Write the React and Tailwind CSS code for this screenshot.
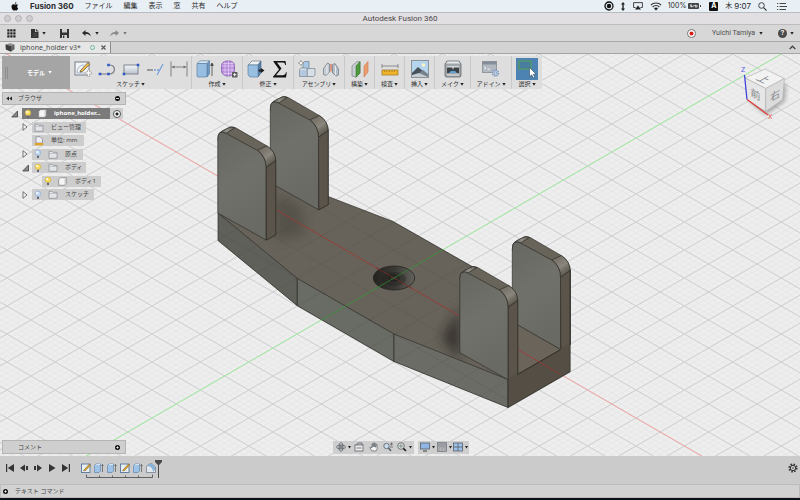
import React from "react";

const JP = "font-['Noto_Sans','Noto_Sans_CJK_JP',sans-serif]";
const UI = "font-['Inter','Noto_Sans_CJK_JP',sans-serif]";

function Svg({ w, h, box, className = "", children }) {
  return (
    <svg width={w} height={h} viewBox={box || `0 0 ${w} ${h}`} className={`block shrink-0 ${className}`} fill="none" aria-hidden="true">
      {children}
    </svg>
  );
}

function Caret({ color = "#222" }) {
  return (
    <Svg w={4} h={3}>
      <path d="M.3 0h3.400L2 2.800z" fill={color} />
    </Svg>
  );
}

/* ---------- menu bar ---------- */

function MenuBar() {
  const menus = ["ファイル", "編集", "表示", "窓", "共有", "ヘルプ"];
  return (
    <header className="flex h-[13px] shrink-0 items-center justify-between border-b border-[#b9bdc2] bg-[#e8eff5] pr-[13px] pl-[11px] text-[7px] leading-[12px] text-[#2b2b2d]">
      <nav className="flex items-center gap-[11px]">
        <button aria-label="Apple">
          <Svg w={8} h={9}>
            <path d="M5.3 0C5.4.9 4.700 1.800 3.900 1.900 3.800 1 4.500.2 5.300 0zM6.900 6.700C6.500 7.700 5.900 8.600 5.200 8.600 4.700 8.600 4.600 8.300 4 8.300S3.300 8.600 2.800 8.600C1.700 8.600.5 6.500.5 4.600.5 3 1.500 2.200 2.500 2.200 3.100 2.200 3.600 2.600 4 2.600S5 2.100 5.700 2.200C6.200 2.200 6.700 2.500 7 2.900 5.700 3.700 5.900 5.700 7.200 6.100z" fill="#111" />
          </Svg>
        </button>
        <button className="text-[8px] font-bold">Fusion 360</button>
        {menus.map((m) => (
          <button key={m}>{m}</button>
        ))}
      </nav>
      <div className="flex items-center">
        <Svg w={10} h={10} className="mr-[6px]">
          <circle cx="5" cy="5" r="4" stroke="#111" strokeWidth="1.300" />
          <circle cx="5" cy="5" r="2.200" fill="#111" />
        </Svg>
        <Svg w={6} h={9} className="mr-[7px]">
          <path d="M3 0l2 2.500H3.700v4H5L3 9 1 6.500h1.300v-4H1z" fill="#222" />
        </Svg>
        <Svg w={10} h={8} className="mr-[7px]">
          <path d="M2.500 5.500H.6V.6h8.800v4.900H7.500" stroke="#333" strokeWidth=".9" />
          <path d="M5 3.600l3 4H2z" fill="#222" />
        </Svg>
        <Svg w={12} h={9} className="mr-[6px]">
          <path d="M.8 3.200C3.600.2 8.400.2 11.200 3.200M2.600 5C4.500 3 7.500 3 9.400 5" stroke="#333" strokeWidth="1.100" />
          <path d="M4 6.400c1.200-1.100 2.800-1.100 4 0L6 8.500z" fill="#222" />
        </Svg>
        <span className="mr-[2px]">100%</span>
        <Svg w={13} h={6} className="mr-[8px]">
          <rect x="0" y="0" width="11" height="6" rx="1" fill="#444" />
          <rect x="12" y="2" width="1" height="2" fill="#444" />
          <path d="M3 1v3l5-2v3M2 3h2M7 3h3" stroke="#e8eff5" strokeWidth=".8" />
        </Svg>
        <span className="mr-[7px] flex h-[9px] w-[9px] items-center justify-center rounded-[1px] bg-[#111] font-bold text-white">A</span>
        <span className="mr-[2px]">木</span>
        <span className="mr-[7px] text-[8px]">9:07</span>
        <button aria-label="検索" className="mr-[10px]">
          <Svg w={9} h={9}>
            <circle cx="3.500" cy="3.500" r="2.800" stroke="#333" strokeWidth=".9" />
            <path d="M5.600 5.600l3 3" stroke="#333" strokeWidth="1.100" />
          </Svg>
        </button>
        <button aria-label="通知">
          <Svg w={10} h={7}>
            <path d="M0 .5h1.200M2.500 .5H9M0 3.500h1.200M2.500 3.500H10M0 6.500h1.200M2.500 6.500H9" stroke="#333" strokeWidth=".9" />
          </Svg>
        </button>
      </div>
    </header>
  );
}

function TitleBar() {
  return (
    <div className="grid h-3 shrink-0 grid-cols-[1fr_auto_1fr] items-center border-b border-[#bdbbbd] bg-[#e2dfe2]">
      <div className="flex gap-[4px] pl-[4px]">
        {["閉じる", "最小化", "拡大"].map((n) => (
          <button key={n} aria-label={n} className="h-[7px] w-[7px] rounded-full border border-[#b4b1b4] bg-[#d0cdd0]" />
        ))}
      </div>
      <h1 className="font-['Roboto',sans-serif] text-[8px] leading-[11px] text-[#4a484a]">Autodesk Fusion 360</h1>
      <span />
    </div>
  );
}

function QuickBar() {
  return (
    <div className="flex h-[17px] shrink-0 items-center justify-between border-b border-[#a9a9a9] bg-[#d7d7d7] pr-[6px] pl-[7px]">
      <div className="flex items-center">
        <button aria-label="データパネル" className="mr-[15px]">
          <Svg w={9} h={9}>
            {[0, 3, 6].flatMap((y) => [0, 3, 6].map((x) => <rect key={`${x}${y}`} x={x + 0.300} y={y + 0.300} width="2.200" height="2.200" fill="#1f1f1f" />))}
          </Svg>
        </button>
        <button aria-label="ファイル" className="mr-[14px] flex items-center gap-[3px]">
          <Svg w={8} h={9}>
            <path d="M0 0h4v3h3.500v6H0z" fill="#333" />
            <path d="M5 0l2.500 2.300H5zM2 5h4M2 7h4" fill="#333" stroke="#777" strokeWidth=".5" />
          </Svg>
          <Caret />
        </button>
        <button aria-label="保存" className="mr-[13px]">
          <Svg w={9} h={9}>
            <path d="M0 0h9v9H0z" fill="#333" />
            <path d="M2 0h5v3.500H2zM2 6h5v3H2z" fill="#d0d0d0" />
            <path d="M3 6.500h1.300V9H3z" fill="#333" />
          </Svg>
        </button>
        <button aria-label="元に戻す" className="mr-[11px] flex items-center gap-[4px]">
          <Svg w={9} h={7}>
            <path d="M0 3L3.500 0v2C7 2 8.500 3.700 8.700 6.500 7.500 4.500 6 4 3.500 4v2z" fill="#2b2b2b" />
          </Svg>
          <Caret />
        </button>
        <button aria-label="やり直し" className="flex items-center gap-[4px]">
          <Svg w={9} h={7}>
            <path d="M9 3L5.500 0v2C2 2 .5 3.700.3 6.500 1.500 4.500 3 4 5.500 4v2z" fill="#8a8a8a" />
          </Svg>
          <Caret color="#777" />
        </button>
      </div>
      <div className="flex items-center font-['Roboto',sans-serif] text-[7px] leading-[10px] text-[#4f4f4f]">
        <button aria-label="記録" className="mr-[16px]">
          <Svg w={9} h={9}>
            <circle cx="4.500" cy="4.500" r="4" fill="#fff" stroke="#555" strokeWidth=".8" />
            <circle cx="4.500" cy="4.500" r="2" fill="#d91e18" />
          </Svg>
        </button>
        <button className="mr-[15px] flex items-center gap-[4px]">
          Yuichi Tamiya
          <Caret />
        </button>
        <button aria-label="ヘルプ" className="flex items-center gap-[3px]">
          <span className="flex h-[9px] w-[9px] items-center justify-center rounded-full bg-[#4a4a4a] text-[7px] font-bold text-white">?</span>
          <Caret />
        </button>
      </div>
    </div>
  );
}

function TabRow() {
  return (
    <div className="flex h-3 shrink-0 items-stretch justify-between border-b border-[#a5a5a5] bg-[#d3d3d3]">
      <div className={`flex items-center border-r border-[#8c8c8c] bg-[#e6e6e6] pr-[4px] pl-[5px] text-[7px] leading-[10px] text-[#4a4a4a] ${JP}`}>
        <Svg w={10} h={9} className="mr-[5px]">
          <path d="M.5 1.500L5 .3l4.500 1.200L6 3z" fill="#8a8a8a" />
          <path d="M.5 1.500L6 3v5.700L.8 6.500z" fill="#3d3d3d" />
          <path d="M6 3l3.500-1.500v4.800L6 8.700z" fill="#666" />
        </Svg>
        <span>iphone_holder v3*</span>
        <Svg w={5} h={5} className="mr-[6px] ml-[9px]">
          <circle cx="2.500" cy="2.500" r="2" stroke="#55b393" strokeWidth=".8" />
        </Svg>
        <button aria-label="タブを閉じる">
          <Svg w={5} h={5}>
            <path d="M.5.5l4 4M4.500.5l-4 4" stroke="#555" strokeWidth="1.100" />
          </Svg>
        </button>
      </div>
      <button aria-label="折りたたむ" className="mr-[4px]">
        <Svg w={7} h={5}>
          <path d="M.7 4L3.500 1.200 6.300 4" stroke="#444" strokeWidth="1.300" />
        </Svg>
      </button>
    </div>
  );
}

/* ---------- ribbon icons ---------- */

const I = {
  sketch: (
    <Svg w={18} h={18}>
      <rect x="1" y="2" width="14" height="13" fill="#f3f5f7" stroke="#767f88" />
      <path d="M3 13C3 8 6 5 10 5M3 13h8" stroke="#8ba0b5" strokeWidth=".8" />
      <path d="M6.500 10.500L14 2.500l1.800 1.800-7.300 7.200-2.500.6z" fill="#f0bd47" stroke="#50463a" strokeWidth=".7" />
      <path d="M11.500 12h2v-2h2v2h2v2h-2v2.500h-2V14h-2z" fill="#fff" stroke="#999" strokeWidth=".6" />
    </Svg>
  ),
  line: (
    <Svg w={18} h={18}>
      <path d="M2 14h9c7 0 7-9 1-9" stroke="#6f757c" strokeWidth="1.100" />
      <path d="M.7 12.700h2.600v2.600H.7zM9.200 12.700h2.600v2.600H9.200zM9.200 3.700h2.600v2.600H9.200z" fill="#2c57c4" />
    </Svg>
  ),
  rect: (
    <Svg w={18} h={18}>
      <defs>
        <linearGradient id="rg" x2="0" y2="1"><stop stopColor="#f5f7fa" /><stop offset="1" stopColor="#b9c1cc" /></linearGradient>
      </defs>
      <rect x="2" y="5" width="14" height="9" fill="url(#rg)" stroke="#767d86" strokeWidth=".9" />
      <path d="M14.700 3.700h2.600v2.600h-2.600zM.7 12.700h2.600v2.600H.7z" fill="#2c57c4" />
    </Svg>
  ),
  trim: (
    <Svg w={18} h={18}>
      <path d="M1 10h6" stroke="#555" strokeWidth="1" />
      <path d="M8 10h6" stroke="#4a82d4" strokeWidth="1.100" strokeDasharray="2 1" />
      <path d="M17 4l-6 11" stroke="#6d9adb" strokeWidth="1.100" />
    </Svg>
  ),
  dim: (
    <Svg w={18} h={18}>
      <path d="M1 1.500v15M17 1.500v15M2 7h14" stroke="#777" strokeWidth=".9" />
      <path d="M1.500 7l3-1.500v3zM16.500 7l-3-1.500v3z" fill="#777" />
    </Svg>
  ),
  extrude: (
    <Svg w={18} h={18}>
      <path d="M1 3.500L4 .8h9.500L11 3.500z" fill="#d5e6f6" stroke="#55748f" strokeWidth=".6" />
      <path d="M11 3.500L13.500.8v13L11 17z" fill="#6a97c2" stroke="#557a9e" strokeWidth=".6" />
      <rect x="1" y="3.500" width="10" height="13.500" rx="1" fill="#98bfe2" stroke="#5c83a8" strokeWidth=".7" />
      <path d="M16 16V4M14.700 5.500L16 3l1.300 2.500z" fill="#333" stroke="#444" strokeWidth=".8" />
    </Svg>
  ),
  form: (
    <Svg w={18} h={18}>
      <path d="M1.500 5.500C2 2 5 1 8.500 1S14 2 14.500 5.500v5C14 14.500 11.500 16 8 16s-6-1.500-6.500-5z" fill="#b78ddb" stroke="#7f52aa" strokeWidth=".8" />
      <path d="M1.500 6h13M1.500 10h13M3 13.500h10M5 1.500v14M8.500 1v15M12 1.500v14M3 3.500h10.500" stroke="#ead9f8" strokeWidth=".6" />
      <rect x="12" y="12" width="5.500" height="5.500" rx="1" fill="#555" />
      <path d="M14.700 13v3.500M13 14.700h3.500" stroke="#fff" strokeWidth=".9" />
    </Svg>
  ),
  press: (
    <Svg w={18} h={18}>
      <path d="M1 5L5 1h9l-3 4z" fill="#edf2f6" stroke="#58646f" strokeWidth=".6" />
      <path d="M11 5l3-4v12l-3 4z" fill="#5580ab" stroke="#456384" strokeWidth=".6" />
      <path d="M1 5h10v12H3l-2-2z" fill="#98bfe2" stroke="#5c83a8" strokeWidth=".7" />
      <path d="M11.500 9.500h2.500V8l3.500 2.500L14 13v-1.500h-2.500z" fill="#1d1d1d" />
    </Svg>
  ),
  sigma: (
    <Svg w={18} h={18}>
      <path d="M2.500 1h12l.6 4h-.8c-.5-2-1.200-2.500-3-2.500H6L10.500 8.600 5 15.300h6.700c1.900 0 2.700-.8 3.300-3h.8l-.8 5.200H2v-.8l6-7.200-5.500-7.700z" fill="#111" />
    </Svg>
  ),
  joint: (
    <Svg w={18} h={18}>
      <path d="M5 3l1.500-1.500H11V9H5z" fill="#a9c8e7" stroke="#6a7e92" strokeWidth=".7" />
      <path d="M1.500 9.500L3 8h6v8.500H1.500zM9 10l1.500-1.500H17V15l-1.500 1.500H9z" fill="#d7dfe8" stroke="#77828d" strokeWidth=".7" />
      <path d="M2 10h6.500v6H2z" fill="#b4c8df" />
      <path d="M3 .5l.9 1.700 1.800.8-1.800.9L3 5.600l-.9-1.700L.4 3l1.700-.8z" fill="#fff" stroke="#777" strokeWidth=".6" />
    </Svg>
  ),
  asm: (
    <Svg w={18} h={18}>
      <path d="M1.500 8.500L5.500 3l2 1v8L4 15.500l-2.500-1z" fill="#c4ccd4" stroke="#6d757d" strokeWidth=".7" />
      <path d="M16.500 9l-3.500-5.500-2.500 1V13l4 3 2-1z" fill="#b3bec8" stroke="#6d757d" strokeWidth=".7" />
      <path d="M5 5v9M13.500 6v9" stroke="#eef1f4" strokeWidth=".9" />
      <path d="M8.200 4h1.600v7.500H8.200z" fill="#d98771" />
    </Svg>
  ),
  build: (
    <Svg w={18} h={18}>
      <path d="M1 6l5-4.500 3 .5v11l-4 4-4-1z" fill="#c9ced2" stroke="#7a828a" strokeWidth=".7" />
      <path d="M5 6L9 1.500V13l-4 4.300z" fill="#4c9a3c" stroke="#377229" strokeWidth=".6" />
      <path d="M13 6l4-4.500V12l-4 5z" fill="#ee9d6f" stroke="#c1764a" strokeWidth=".6" />
    </Svg>
  ),
  inspect: (
    <Svg w={18} h={18}>
      <path d="M1 6h16M1 4v4M17 4v4" stroke="#777" strokeWidth=".8" />
      <rect x="1" y="10" width="16" height="5" fill="#eeb42c" stroke="#9d7620" strokeWidth=".7" />
      <path d="M3.500 10.500v1.500M6 10.500v1.500M8.500 10.500v1.500M11 10.500v1.500M13.500 10.500v1.500" stroke="#8b6717" strokeWidth=".6" />
    </Svg>
  ),
  insert: (
    <Svg w={18} h={18}>
      <rect x=".5" y=".5" width="17" height="17" fill="#b5d5ec" stroke="#8a939a" />
      <circle cx="12.500" cy="5" r="1.800" fill="#fdf5c4" />
      <path d="M1 13l6-6 10 8v2H1z" fill="#47515b" />
      <path d="M9 12l3-2 5 4v3H9z" fill="#75818b" />
      <path d="M1 15l7-2 9 4H1z" fill="#c6cdd2" />
    </Svg>
  ),
  make: (
    <Svg w={18} h={18}>
      <path d="M1 4l2-3h12l2 3v12l-1 1H2l-1-1z" fill="#a0a5aa" stroke="#666b70" strokeWidth=".8" />
      <path d="M2 3.500L3.500 1.500h11L16 3.500z" fill="#e6e9eb" />
      <rect x="3" y="6" width="12" height="7" fill="#3c4146" />
      <path d="M3 6h12v1.500H9.800L9 10 8.200 7.500H3z" fill="#d3d8dc" />
      <path d="M5 13l2-2h4l2 2z" fill="#5da3d6" />
      <path d="M3 15h12" stroke="#dcdfe1" strokeWidth="1.200" />
    </Svg>
  ),
  addin: (
    <Svg w={18} h={18}>
      <rect x=".5" y="1.500" width="14" height="11" fill="#b2b8c0" stroke="#858b94" strokeWidth=".8" />
      <path d="M.5 1.500h14v3H.5z" fill="#858d98" />
      <path d="M2.500 7l1.500 1-1.500 1M5.500 9.200h2.500" stroke="#fff" strokeWidth=".8" />
      <circle cx="13.500" cy="13" r="3" fill="#b9cce3" stroke="#7a93b5" strokeWidth="1.300" strokeDasharray="1.500 .8" />
      <circle cx="13.500" cy="13" r="1.100" fill="#f1f3f6" stroke="#6c87aa" strokeWidth=".6" />
    </Svg>
  ),
  select: (
    <Svg w={22} h={22}>
      <rect width="22" height="22" fill="#4d83b3" />
      <rect x="3" y="3" width="12" height="8" stroke="#56a14e" strokeWidth="1" fill="#4a7e9f" />
      <path d="M13.500 9.500v9.300l2.200-2 1.400 3.200 1.600-.7-1.400-3.100h2.900z" fill="#fff" stroke="#31475d" strokeWidth=".6" />
    </Svg>
  ),
};

const groups = [
  { label: "スケッチ", w: "w-[122px]", icons: ["sketch", "line", "rect", "trim", "dim"] },
  { label: "作成", w: "w-[51px]", icons: ["extrude", "form"] },
  { label: "修正", w: "w-[51px]", icons: ["press", "sigma"] },
  { label: "アセンブリ", w: "w-[51px]", icons: ["joint", "asm"] },
  { label: "構築", w: "w-[30px]", icons: ["build"] },
  { label: "検査", w: "w-[30px]", icons: ["inspect"] },
  { label: "挿入", w: "w-[30px]", icons: ["insert"] },
  { label: "メイク", w: "w-[36px]", icons: ["make"] },
  { label: "アドイン", w: "w-[41px]", icons: ["addin"] },
  { label: "選択", w: "w-[30px]", icons: ["select"] },
];

function Ribbon() {
  return (
    <div className={`flex h-[33px] w-max bg-[#dedede] text-[6px] leading-[8px] text-[#2d2d2d] ${JP}`}>
      <button className="flex w-[68px] items-center bg-[#a5a5a5] pl-[3px] font-bold text-white">
        <span className="mr-[19px] h-3 w-[3px] border-x border-[#8e8e8e]" />
        <span className="mr-[3px]">モデル</span>
        <Caret color="#fff" />
      </button>
      {groups.map((g, i) => (
        <div key={g.label} className={`flex flex-col items-center pt-[2px] ${g.w} ${i < 9 ? "border-r border-[#c9c9c9]" : ""}`}>
          <div className="flex h-[22px] items-center">
            {g.icons.map((k) => (
              <button key={k} aria-label={`${g.label} ${k}`} className="flex w-6 justify-center">
                {I[k]}
              </button>
            ))}
          </div>
          <button className="flex items-center gap-px whitespace-nowrap">
            {g.label}
            <Caret />
          </button>
        </div>
      ))}
    </div>
  );
}

/* ---------- browser tree ---------- */

function Bulb({ on }) {
  return (
    <Svg w={8} h={10}>
      <circle cx="4" cy="3.800" r="2.800" fill={on ? "#fbdc5c" : "#bfd6f4"} stroke={on ? "#cda842" : "#8ea9d0"} strokeWidth=".6" />
      <circle cx="3.200" cy="3" r="1.100" fill="#fff" />
      <path d="M3 6.800h2v2.200H3z" fill="#667" />
    </Svg>
  );
}
function Folder() {
  return (
    <Svg w={10} h={9}>
      <path d="M1 8.300v-7h3l1 1h4v6z" fill="#e3e5e8" stroke="#8d9299" strokeWidth=".8" />
      <path d="M1 3.500h8" stroke="#a7acb3" strokeWidth=".6" />
    </Svg>
  );
}
function Body() {
  return (
    <Svg w={9} h={9}>
      <path d="M.7 2.300L2.500.7h5.800v6L6.500 8.300H.7z" fill="#f6f6f6" stroke="#7d7d7d" strokeWidth=".7" />
      <path d="M6.500 2.500L8 1v5.500L6.500 8z" fill="#ccc" />
    </Svg>
  );
}
function Units() {
  return (
    <Svg w={10} h={10}>
      <path d="M2 .7h4l2.500 2.500V7H2z" fill="#eef0f3" stroke="#7b8087" strokeWidth=".7" />
      <rect x=".8" y="7" width="8.400" height="2.300" fill="#e2a32c" />
    </Svg>
  );
}
function Twist({ open }) {
  return (
    <button aria-label={open ? "閉じる" : "開く"} className="flex w-[10px] shrink-0 items-center">
      <Svg w={7} h={8}>
        {open ? <path d="M6.500 1v6H.7z" fill="#888" stroke="#333" strokeWidth=".7" /> : <path d="M1 .7v6.600L5 4z" fill="#f4f4f4" stroke="#555" strokeWidth=".8" />}
      </Svg>
    </button>
  );
}

const rows = [
  { pad: "pl-[11px]", twist: "closed", w: "w-[54px]", icons: [<Folder key="f" />], text: "ビュー管理" },
  { pad: "pl-[11px]", w: "w-[52px]", icons: [<Units key="u" />], text: "単位: mm" },
  { pad: "pl-[11px]", twist: "closed", w: "w-[51px]", icons: [<Bulb key="b" />, <Folder key="f" />], text: "原点" },
  { pad: "pl-[11px]", twist: "open", w: "w-[54px]", icons: [<Bulb key="b" on />, <Folder key="f" />], text: "ボディ" },
  { pad: "pl-[21px]", w: "w-[59px]", icons: [<Bulb key="b" on />, <Body key="o" />], text: "ボディ1" },
  { pad: "pl-[11px]", twist: "closed", w: "w-[62px]", icons: [<Bulb key="b" />, <Folder key="f" />], text: "スケッチ" },
];

function Browser() {
  return (
    <section className={`w-[124px] text-[6px] leading-[9px] text-[#444] ${JP}`}>
      <div className="flex h-[13px] items-center border border-[#b4b4b4] bg-[#cfcfcf] pr-[5px] pl-[3px]">
        <Svg w={6} h={5} className="mr-[6px]">
          <path d="M3 .5v4L.3 2.500zM6 .5v4L3.300 2.500z" fill="#222" />
        </Svg>
        <h2 className="flex-1">ブラウザ</h2>
        <button aria-label="最小化">
          <Svg w={5} h={5}>
            <circle cx="2.500" cy="2.500" r="2.500" fill="#111" />
            <path d="M1 2.500h3" stroke="#fff" strokeWidth=".8" />
          </Svg>
        </button>
      </div>
      <ul className="mt-[3px] flex h-[92px] flex-col justify-between pl-[9px]">
        <li className="flex h-[11px] items-center">
          <span className="w-[11px]"><Twist open /></span>
          <div className="flex h-[11px] w-[88px] items-center bg-[#7b7b7b] pl-[2px] font-bold text-white">
            <span className="flex w-[14px]"><Bulb on /></span>
            <span className="flex w-[16px]"><Body /></span>
            <span>iphone_holder...</span>
          </div>
          <div className="flex h-[11px] w-[13px] items-center justify-center bg-[#cdcdcd]">
            <input type="radio" name="active" defaultChecked aria-label="iphone_holder" className="h-[8px] w-[8px] appearance-none rounded-full border border-[#555] bg-[radial-gradient(circle,#222_1px,#fff_2px)]" />
          </div>
        </li>
        {rows.map((r) => (
          <li key={r.text} className={`flex h-[11px] items-center ${r.pad}`}>
            {r.twist ? <Twist open={r.twist === "open"} /> : <span className="w-[10px]" />}
            <div className={`flex h-[11px] items-center bg-[#cdcdcd] pl-[2px] whitespace-nowrap ${r.w}`}>
              {r.icons.map((ic, i) => (
                <span key={i} className="flex w-[14px]">{ic}</span>
              ))}
              <span className="pl-[3px]">{r.text}</span>
            </div>
          </li>
        ))}
      </ul>
    </section>
  );
}

/* ---------- canvas ---------- */

const EDGE = "#2f2e2a";

function Plate({ x, y }) {
  return (
    <g transform={`translate(${x} ${y})`} stroke={EDGE} strokeWidth=".7" strokeLinejoin="round">
      <path d="M218 140Q217.500 133.500 221 132L230 127Q233 126.500 236 128L267 146Q275.700 151.500 275.700 162V235L266 240z" fill="#696459" />
      <path d="M219 134Q221 130.500 231 127L235 127.800 226.500 133z" fill="url(#cornerA)" />
      <path d="M266 167.500L275.700 160V235L266.300 240z" fill="#5a544a" />
      <path d="M257.500 150L267 145.800Q275.700 152 275.700 161L266 167.500Q266 157 257.500 150z" fill="url(#cornerB)" />
      <path d="M217.800 139Q217.800 129.500 226 133.300L257.500 150.500Q266 157 266 167.500V240L217.800 213z" fill="url(#plateFace)" />
    </g>
  );
}

const RISE = 0.5785;
const base = "M218 213L275 185 328 196.500 393 221.500 473 267 570 330V371.700L508 407.500 394 361.500 297.300 305.700 218 240.500z";

function Scene() {
  return (
    <svg className="absolute inset-0 h-full w-full" viewBox="0 54 800 402" preserveAspectRatio="xMidYMid slice" role="img" aria-label="iphone_holder v3">
      <defs>
        <pattern id="minor" x="394" y="278" width="9.680" height="5.600" patternUnits="userSpaceOnUse">
          <path d="M0 0L9.680 5.600M9.680 0L0 5.600" stroke="#dddedf" strokeWidth=".5" />
        </pattern>
        <pattern id="major" x="394" y="278" width="48.400" height="28" patternUnits="userSpaceOnUse">
          <path d="M0 0L48.400 28M48.400 0L0 28" stroke="#c6c7c8" strokeWidth=".8" />
        </pattern>
        <pattern id="faint" x="394" y="278" width="48.400" height="28" patternUnits="userSpaceOnUse">
          <path d="M0 0L48.400 28M48.400 0L0 28" stroke="#3d3a34" strokeWidth=".5" />
        </pattern>
        <linearGradient id="plateFace" x1="0" y1="0" x2=".3" y2="1">
          <stop stopColor="#666761" /><stop offset=".5" stopColor="#70716b" /><stop offset="1" stopColor="#696a64" />
        </linearGradient>
        <linearGradient id="cornerA"><stop stopColor="#4c4d49" /><stop offset=".5" stopColor="#92918a" /><stop offset="1" stopColor="#5f5a50" /></linearGradient>
        <linearGradient id="cornerB" x1="0" y1="0" x2=".6" y2="1"><stop stopColor="#6a645a" /><stop offset=".6" stopColor="#8b877e" /><stop offset="1" stopColor="#56504690" /></linearGradient>
        <linearGradient id="holeFill"><stop stopColor="#24231f" /><stop offset=".5" stopColor="#383733" /><stop offset="1" stopColor="#62615b" /></linearGradient>
        <filter id="soft" x="-80%" y="-80%" width="260%" height="260%"><feGaussianBlur stdDeviation="6" /></filter>
        <clipPath id="topClip"><path d="M218 213L275 185 328 196.500 393 221.500 473 267 570 330 508 379.500 394 334 297.300 278.400z" /></clipPath>
        <clipPath id="baseClip"><path d={base} /></clipPath>
        <filter id="cubeSoft" x="-50%" y="-50%" width="200%" height="200%"><feGaussianBlur stdDeviation="2" /></filter>
      </defs>

      <rect y="54" width="800" height="402" fill="#eeeeef" />
      <rect y="54" width="800" height="402" fill="url(#minor)" />
      <rect y="54" width="800" height="402" fill="url(#major)" />
      <path d={`M0 ${278 - 394 * RISE}L800 ${278 + 406 * RISE}`} stroke="#f7a19e" strokeWidth=".9" />
      <path d={`M0 ${278 + 394 * RISE}L800 ${278 - 406 * RISE}`} stroke="#9bf097" strokeWidth=".9" />

      <path d={base} fill="#67635a" />
      <g clipPath="url(#topClip)">
        <path d="M275 195v45l30-5-5-30z" fill="#3b3830" opacity=".4" filter="url(#soft)" />
        <path d="M460 308v52l-18-22z" fill="#201f1b" opacity=".7" filter="url(#soft)" />
      </g>
      <g stroke={EDGE} strokeWidth=".7" strokeLinejoin="round">
        <path d="M218 213l79.300 65.400v27.300L218 240.500z" fill="#5f605a" />
        <path d="M297.300 278.400L394 334v27.500l-96.700-55.800z" fill="#696b65" />
        <path d="M394 334l114 45.500v28L394 361.500z" fill="#6b6c66" />
        <path d="M328 196.500L393 221.500 473 267" fill="none" />
      </g>
      <g clipPath="url(#baseClip)">
        <rect x="200" y="180" width="380" height="230" fill="url(#faint)" opacity=".3" />
        <path d={`M200 ${278 - 194 * RISE}L580 ${278 + 186 * RISE}`} stroke="#a53a33" strokeWidth=".8" />
        <path d={`M300 ${278 + 94 * RISE}L480 ${278 - 86 * RISE}`} stroke="#3f9440" strokeWidth=".9" />
      </g>

      <ellipse cx="394" cy="278" rx="20.700" ry="12" fill="url(#holeFill)" stroke="#24231f" strokeWidth=".8" />
      <ellipse cx="394" cy="279" rx="12" ry="7" fill="#1e1d1b" opacity=".35" />
      <ellipse cx="394" cy="278" rx="5" ry="2.800" fill="none" stroke="#161614" strokeWidth=".7" />
      <path d="M376 267.600l36 20.800" stroke="#7c2622" strokeWidth=".7" />
      <path d="M376 288.400l32-18.500" stroke="#2f8232" strokeWidth=".8" />

      <Plate x={52.500} y={-30.300} />
      <Plate x={0} y={0} />

      <path d="M508 379.500L570 343v28.700L508 407.500z" fill="#544e45" />
      <path d="M561 277l9-8v76l-9 5z" fill="#5a544a" />
      <Plate x={294.500} y={109.700} />
      <path d="M560.900 349l8.900-5V346l-9 6z" fill="#554f46" />
      <path d="M517 324.500L560.700 349.500 517.700 374.300z" fill="#6a645b" stroke={EDGE} strokeWidth=".7" />
      <path d="M517.700 349.500l53 30.600" stroke="#a53a33" strokeWidth=".8" clipPath="url(#baseClip)" />
      <Plate x={242} y={139.700} />
      <path d="M508.600 378l8.700-5 .5 2 42-24 1-3 8.900-5v28.300l-61.100 35.600z" fill="#544e45" />
      <path d="M517.700 374.500l43-25" stroke={EDGE} strokeWidth=".7" />
      <path d="M537.500 361l22 12.700" stroke="#993832" strokeWidth=".8" />
      <path d="M508 379.500v28L570.200 371.700V270" fill="none" stroke={EDGE} strokeWidth=".8" />

      <g>
        <path d="M750 102l16 13 19-14 1-18-20 10z" fill="#777" opacity=".6" filter="url(#cubeSoft)" />
        <g stroke="#b5b5b6" strokeWidth=".7" strokeLinejoin="round">
          <path d="M745 78l20-9 19.300 9.500-18.600 10z" fill="#f2f2f2" />
          <path d="M745 78l20.700 10.500v23L746.700 99.300z" fill="#e6e6e6" />
          <path d="M765.700 88.500l18.600-10-1.500 21-17.100 12z" fill="#dcdcdc" />
        </g>
        <g className="font-['Noto_Sans_CJK_JP',sans-serif]" fontSize="10" fill="#85868a" textAnchor="middle">
          <text transform="translate(764 79) rotate(25) skewX(-35)" y="4">上</text>
          <text transform="translate(755.500 94) skewY(30)" y="4">前</text>
          <text transform="translate(775 95) skewY(-30)" y="4">右</text>
        </g>
        <path d="M747 99.500L744.500 75" stroke="#3a3ee0" strokeWidth="1.200" />
        <path d="M747 99.500L768 115" stroke="#e03a36" strokeWidth="1.200" />
        <g className="font-['Roboto',sans-serif]" fontSize="7">
          <text x="741" y="72" fill="#5558e8">Z</text>
          <text x="768" y="119" fill="#ec5a55">X</text>
        </g>
      </g>
    </svg>
  );
}

const nav1 = [
  { n: "オービット", w: "w-[18px]", caret: true, d: <><ellipse cx="5" cy="5" rx="4.500" ry="2" /><ellipse cx="5" cy="5" rx="2" ry="4.500" /><path d="M5 3v4M3 5h4" /></> },
  { n: "ビュー正面", w: "w-[14px]", d: <><rect x="1" y="3" width="8" height="6" fill="#eee" /><path d="M2.500 3L4 1h4v2M2.500 6h5" /></> },
  { n: "画面移動", w: "w-[15px]", d: <path d="M3 9L.8 5.500 2 5l1 1V2h1v3-4h1.200v4l.3-3.700h1.200V5.300l.4-2.800h1V7L7 9z" fill="#f5f5f5" strokeWidth=".7" /> },
  { n: "ズーム", w: "w-[14px]", d: <><circle cx="3.500" cy="4" r="2.700" fill="#c8dbef" /><path d="M5.500 6L8 9" strokeWidth="1.500" /><path d="M7 2h3M8.500.5v3M7 5h3" /></> },
  { n: "フィット", w: "w-[18px]", caret: true, d: <><circle cx="4" cy="4" r="3.300" fill="#d6e2d6" /><path d="M4 2v4M2 4h4" strokeWidth=".6" /><path d="M6.300 6.300L9 9" stroke="#222" strokeWidth="1.700" /></> },
];
const nav2 = [
  { n: "表示設定", w: "w-[17px]", caret: true, d: <><rect x=".5" y="1" width="9" height="6" fill="#8fb6e4" /><path d="M3 9h4" strokeWidth="1.300" /></> },
  { n: "グリッド", w: "w-[16px]", caret: true, d: <><rect x=".5" y=".5" width="9" height="9" fill="#9a9da1" stroke="#7d8186" /><path d="M1 6h8M1 8h8M3.500 6v3M6.500 6v3" stroke="#c4c6c8" strokeWidth=".5" /></> },
  { n: "ビューポート", w: "w-[16px]", caret: true, d: <><rect x=".5" y="1" width="9" height="8" fill="#9cc1ea" /><path d="M5 1v8M.5 5h9" /></> },
];

function NavGroup({ items }) {
  return (
    <div className="flex h-[13px] items-center bg-[#cecece] px-[1px]">
      {items.map((it) => (
        <button key={it.n} aria-label={it.n} className={`flex items-center justify-center gap-[2px] ${it.w}`}>
          <Svg w={10} h={10}>
            <g stroke="#5a6068" strokeWidth=".8">{it.d}</g>
          </Svg>
          {it.caret && <Svg w={3} h={3}><path d="M0 0h3L1.500 2.500z" fill="#222" /></Svg>}
        </button>
      ))}
    </div>
  );
}

function Viewport() {
  return (
    <main className="relative flex min-h-0 flex-1 flex-col justify-between overflow-hidden bg-[#ededee]">
      <Scene />
      <div className="relative flex flex-col items-start gap-[3px] pt-[2px] pl-[2px]">
        <Ribbon />
        <Browser />
      </div>
      <div className="relative grid grid-cols-[1fr_auto_1fr] items-center pb-[2px] pl-[2px]">
        <div className={`flex h-[14px] w-[124px] items-center justify-between border border-[#b4b4b4] bg-[#cfcfcf] pr-[5px] pl-[15px] text-[6px] leading-[9px] text-[#444] ${JP}`}>
          <h2>コメント</h2>
          <button aria-label="コメントを追加">
            <Svg w={5} h={5}>
              <circle cx="2.500" cy="2.500" r="2.500" fill="#111" />
              <path d="M1.300 2.500h2.400M2.500 1.300v2.400" stroke="#fff" strokeWidth=".8" />
            </Svg>
          </button>
        </div>
        <div className="flex gap-[4px]">
          <NavGroup items={nav1} />
          <NavGroup items={nav2} />
        </div>
      </div>
    </main>
  );
}

/* ---------- timeline ---------- */

const play = [
  { n: "最初へ", d: "M0 0h1.200v8H0zM8 0v8L1.800 4z" },
  { n: "前へ", d: "M5 .5v7L0 4zM6 2h2v4H6z" },
  { n: "次へ", d: "M3 .5v7L8 4zM0 2h2v4H0z" },
  { n: "再生", d: "M1 0v8l6.500-4z" },
  { n: "最後へ", d: "M6.800 0H8v8H6.800zM0 0v8l6.200-4z" },
];

const SketchMini = (
  <Svg w={10} h={10}>
    <rect x=".5" y="1" width="8.500" height="8.500" fill="#e9eef4" stroke="#55749c" strokeWidth=".9" />
    <path d="M2.500 7.500L8.500 1l1 1.200L4 8z" fill="#efae1f" stroke="#5b4a20" strokeWidth=".5" />
  </Svg>
);
const ExtrudeMini = (
  <Svg w={10} h={10}>
    <path d="M.5 2.500L2 1h4.500v7L5 9.500H.5z" fill="#9fc3e7" stroke="#5f86b0" strokeWidth=".7" />
    <path d="M1.500 2.500L2.500 1.500H6" stroke="#e9f2fb" strokeWidth=".8" />
    <path d="M8.500 9V1.500M7.500 3l1-1.500 1 1.500" stroke="#555" strokeWidth=".7" />
  </Svg>
);
const FilletMini = (
  <Svg w={10} h={10}>
    <path d="M.5 9.500V4.500C1 2 3 .7 6 .7L9.500 4v5.500z" fill="#e3e8ed" stroke="#667686" strokeWidth=".7" />
    <path d="M4 .8C7 1 9 3 9.500 6L7 9C7 5 4.500 3.500 1.500 3z" fill="#86b3dc" />
  </Svg>
);
const features = [SketchMini, ExtrudeMini, ExtrudeMini, SketchMini, ExtrudeMini, FilletMini];

function Timeline() {
  return (
    <div className="flex h-[28px] shrink-0 items-start bg-[#cbcbcb] pl-[6px]">
      <div className="mt-[8px] mr-[11px] flex gap-[6px]">
        {play.map((p) => (
          <button key={p.n} aria-label={p.n}>
            <Svg w={8} h={8}><path d={p.d} fill="#333" /></Svg>
          </button>
        ))}
      </div>
      <div className="mt-[7px]">
        <div className="flex gap-[3px]">
          {features.map((f, i) => (
            <button key={i} aria-label={`フィーチャ ${i + 1}`}>{f}</button>
          ))}
        </div>
        <Svg w={72} h={5}>
          <path d="M5.500 1.500v3h66v-3M18.500 2.500v2M31.500 2.500v2M44.500 2.500v2M57.500 2.500v2" stroke="#555" strokeWidth=".9" />
        </Svg>
      </div>
      <Svg w={7} h={19} className="-ml-px mt-[4px]">
        <path d="M0 0h7v2L4 5v13H3V5L0 2z" fill="#4a4a4a" />
      </Svg>
      <button aria-label="設定" className="mt-[7px] mr-[2px] ml-auto">
        <Svg w={10} h={10}>
          <circle cx="5" cy="5" r="3.600" stroke="#333" strokeWidth="2" strokeDasharray="1.500 1.330" />
          <circle cx="5" cy="5" r="2.700" stroke="#333" strokeWidth="1" fill="#cbcbcb" />
          <circle cx="5" cy="5" r=".8" fill="#333" />
        </Svg>
      </button>
    </div>
  );
}

export default function App() {
  return (
    <div className={`flex h-screen flex-col overflow-hidden bg-[#0c1116] ${UI}`}>
      <MenuBar />
      <TitleBar />
      <QuickBar />
      <TabRow />
      <Viewport />
      <Timeline />
      <footer className={`mb-[2px] flex h-[14px] shrink-0 items-center border border-[#bcbcbc] bg-[#d2d2d2] pl-[2px] text-[6px] leading-[9px] text-[#444] ${JP}`}>
        <button className="flex items-center gap-[7px]">
          <Svg w={5} h={5}>
            <circle cx="2.500" cy="2.500" r="2.500" fill="#111" />
            <path d="M1.300 2.500h2.400M2.500 1.300v2.400" stroke="#fff" strokeWidth=".8" />
          </Svg>
          テキスト コマンド
        </button>
      </footer>
    </div>
  );
}
